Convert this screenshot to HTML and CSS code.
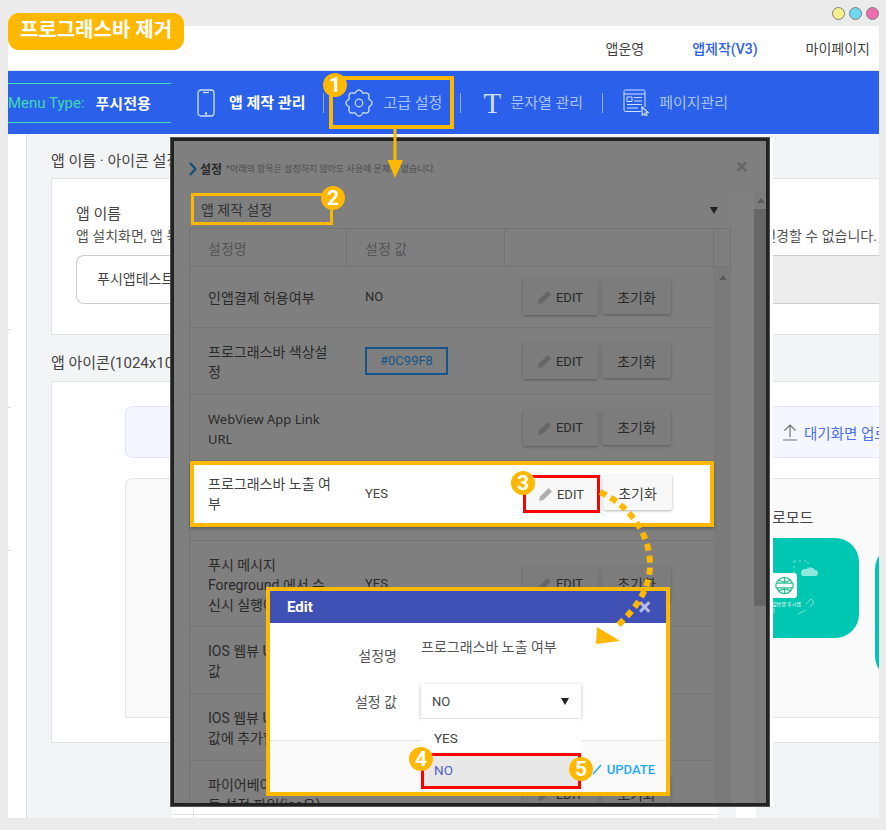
FILE: index.html
```html
<!DOCTYPE html>
<html lang="ko">
<head>
    <meta charset="UTF-8">
    <title>프로그래스바 제거</title>
    <link rel="stylesheet" href="styles.css">
</head>
<body>

    <div class="window">

        <header class="top">
            <a class="top-link">앱운영</a>
            <a class="top-link top-on">앱제작(V3)</a>
            <a class="top-link">마이페이지</a>
        </header>

        <nav class="nav">
            <div class="menu-type"><span class="menu-label">Menu Type:</span><b>푸시전용</b></div>
            <div class="nav-item nav-on">
                <svg class="ico-phone" viewBox="0 0 18 28" fill="none" stroke="#cfe0ff" stroke-width="1.3"><rect x="1" y="1" width="16" height="26" rx="3"/><path d="M6 3.5h6"/><circle cx="9" cy="24.5" r=".6"/></svg>
                <span>앱 제작 관리</span>
            </div>
            <i class="nav-sep"></i>
            <div class="nav-item">
                <svg class="ico-gear" viewBox="0 0 28 28" fill="none" stroke="#cfe0ff" stroke-width="1.2"><path d="M23.7 9.98Q30.5 14 23.7 18.02Q25.67 25.67 18.02 23.7Q14 30.5 9.98 23.7Q2.33 25.67 4.3 18.02Q-2.5 14 4.3 9.98Q2.33 2.33 9.98 4.3Q14 -2.5 18.02 4.3Q25.67 2.33 23.7 9.98z"/><circle cx="14" cy="14" r="3.8"/></svg>
                <span>고급 설정</span>
            </div>
            <i class="nav-sep sep-b"></i>
            <div class="nav-item nav-text">
                <span class="ico-t">T</span>
                <span>문자열 관리</span>
            </div>
            <i class="nav-sep sep-c"></i>
            <div class="nav-item">
                <svg class="ico-page" viewBox="0 0 26 27" fill="none" stroke="#cfe0ff" stroke-width="1"><path d="M18 22.500H2.500A1.500 1.500 0 0 1 1 21V2.500A1.500 1.500 0 0 1 2.500 1h18A1.500 1.500 0 0 1 22 2.500V18M1 5h21M4 8h5v4.500H4zM11 8.500h8M11 12h8M4 15.500h15M4 19h11"/><path d="M19 18l6 5.500-2.500.5 1.500 2-1.500 1-1.500-2.200-1.800 1.400z" stroke-width="1.2"/></svg>
                <span>페이지관리</span>
            </div>
        </nav>

        <div class="main">
            <aside class="side"><i></i><i></i><i></i></aside>
            <div class="content">
                <h3 class="sec-title first">앱 이름 · 아이콘 설정</h3>
                <section class="card card-name">
                    <p class="field-name">앱 이름</p>
                    <p class="field-help">앱 설치화면, 앱 목록에 노출되는 이름입니다. 앱의 이름은 앱 제작을 완료하여 앱 스토어 마켓에 등록한 이후에는 더 이상 변경할 수 없습니다.</p>
                    <div class="name-input">
                        <span class="name-value">푸시앱테스트</span>
                        <span class="name-rest"></span>
                    </div>
                </section>

                <h3 class="sec-title">앱 아이콘(1024x1024)</h3>
                <section class="card card-icon">
                    <div class="upload">
                        <svg class="ico-up" viewBox="0 0 16 18" fill="none" stroke="#6b7280" stroke-width="1.2"><path d="M8 14V2M2.500 7.500L8 2l5.500 5.500M1 17h14"/></svg>
                        <span>대기화면 업로드</span>
                    </div>
                    <div class="preview">
                        <p class="preview-title">로모드</p>
                        <div class="shots">
                            <div class="shot">
                                <svg class="shot-deco" viewBox="0 0 87 100" fill="none" stroke="#7fe3d6" stroke-width="1"><path d="M22 23h14v10M22 23v12" stroke-dasharray="2 3"/><path d="M29 35a4 4 0 0 1 4-4h2a5 5 0 0 1 8 1 3 3 0 0 1 0 6H31a3 3 0 0 1-2-3z" fill="#8ee8dc" stroke="none"/><path d="M34 66l5-5 3 3-4 5M26 76l8-4M2 70v6"/></svg>
                                <div class="shot-tile">
                                    <svg viewBox="0 0 20 20" fill="none" stroke="#2fbf8f" stroke-width="1.3"><circle cx="10" cy="10" r="8.500" fill="#e8fbf4"/><path d="M10 1.500v17M4 4.500c3.500 2 8.500 2 12 0M4 15.500c3.500-2 8.500-2 12 0"/><rect x="1" y="7.500" width="18" height="5" rx="1" fill="#fff"/></svg>
                                </div>
                                <span class="shot-text">일반앱 푸시앱</span>
                            </div>
                            <div class="shot shot-next"></div>
                        </div>
                    </div>
                </section>
                <div class="foot">
                    <i class="foot-a"></i>
                    <i class="foot-b"></i>
                </div>
            </div>
        </div>
    </div>

    <div class="dots"><i class="dot-y"></i><i class="dot-c"></i><i class="dot-p"></i></div>
    <div class="tag">프로그래스바 제거</div>

    <!-- dimmed settings dialog -->
    <div class="dialog">
        <div class="dlg-head">
            <svg class="chev" viewBox="0 0 8 14" fill="none" stroke="#0f4f80" stroke-width="2.2"><path d="M1 1l5.500 6L1 13"/></svg>
            <b>설정</b>
            <small>*아래의 항목은 설정하지 않아도 사용에 문제가 없습니다.</small>
            <span class="dlg-x">×</span>
        </div>
        <div class="dlg-body">
            <div class="dlg-left">
                <div class="group">앱 제작 설정<i class="caret"></i></div>
                <div class="thead">
                    <span class="c1">설정명</span><span class="c2">설정 값</span><span class="c3"></span><span class="c4"></span>
                </div>
                <div class="tbody">
                    <div class="rows">
                        <div class="row h61">
                            <span class="c1">인앱결제 허용여부</span><span class="c2">NO</span>
                            <span class="c3"><button class="btn btn-edit"><svg class="pencil" viewBox="0 0 14 14"><path d="M0 14l1-4.500L9.500 1l3.500 3.500L4.500 13z" fill="#666"/></svg>EDIT</button><button class="btn btn-reset">초기화</button></span>
                        </div>
                        <div class="row h67">
                            <span class="c1">프로그래스바 색상설정</span><span class="c2"><span class="color-box">#0C99F8</span></span>
                            <span class="c3"><button class="btn btn-edit"><svg class="pencil" viewBox="0 0 14 14"><path d="M0 14l1-4.500L9.500 1l3.500 3.500L4.500 13z" fill="#666"/></svg>EDIT</button><button class="btn btn-reset">초기화</button></span>
                        </div>
                        <div class="row h66">
                            <span class="c1 lat">WebView App Link URL</span><span class="c2"></span>
                            <span class="c3"><button class="btn btn-edit"><svg class="pencil" viewBox="0 0 14 14"><path d="M0 14l1-4.500L9.500 1l3.500 3.500L4.500 13z" fill="#666"/></svg>EDIT</button><button class="btn btn-reset">초기화</button></span>
                        </div>
                        <div class="row h80"></div>
                        <div class="row h86">
                            <span class="c1">푸시 메시지 Foreground 에서 수신시 실행여부</span><span class="c2">YES</span>
                            <span class="c3"><button class="btn btn-edit"><svg class="pencil" viewBox="0 0 14 14"><path d="M0 14l1-4.500L9.500 1l3.500 3.500L4.500 13z" fill="#666"/></svg>EDIT</button><button class="btn btn-reset">초기화</button></span>
                        </div>
                        <div class="row h67">
                            <span class="c1">IOS 웹뷰 UserAgent 값</span><span class="c2"></span><span class="c3"></span>
                        </div>
                        <div class="row h67">
                            <span class="c1">IOS 웹뷰 UserAgent 값에 추가할 값</span><span class="c2"></span><span class="c3"></span>
                        </div>
                        <div class="row h67">
                            <span class="c1">파이어베이스 구글 모듈 설정 파일(ios용)</span><span class="c2"></span>
                            <span class="c3"><button class="btn btn-edit"><svg class="pencil" viewBox="0 0 14 14"><path d="M0 14l1-4.500L9.500 1l3.500 3.500L4.500 13z" fill="#666"/></svg>EDIT</button><button class="btn btn-reset">초기화</button></span>
                        </div>
                    </div>
                    <div class="tbar"><i></i></div>
                </div>
            </div>
            <div class="dlg-bar"><i class="bar-up"></i><i class="bar-thumb"></i></div>
        </div>
    </div>

    <!-- callouts on top of the screenshot -->
    <div class="mark mark-gear"></div>
    <div class="mark mark-group"></div>

    <div class="hl-row">
        <span class="c1">프로그래스바 노출 여부</span><span class="c2">YES</span>
        <span class="c3"><button class="btn btn-edit red-box"><svg class="pencil" viewBox="0 0 14 14"><path d="M0 14l1-4.500L9.500 1l3.500 3.500L4.500 13z" fill="#b0b0b0"/></svg>EDIT</button><button class="btn btn-reset">초기화</button></span>
    </div>

    <div class="edit-pop">
        <div class="pop-head"><b>Edit</b><span class="pop-x">×</span></div>
        <div class="pop-body">
            <div class="pop-line line-name"><label>설정명</label><span>프로그래스바 노출 여부</span></div>
            <div class="pop-line line-value"><label>설정 값</label>
                <div class="select">NO<i class="caret"></i></div>
            </div>
        </div>
        <div class="pop-foot">
            <span class="update"><svg viewBox="0 0 10 12" fill="none" stroke="#1fa8ff" stroke-width="1.5"><path d="M1 11L9 2"/></svg>UPDATE</span>
        </div>
        <div class="menu">
            <div class="menu-item">YES</div>
            <div class="menu-item menu-on">NO</div>
        </div>
    </div>

    <svg class="arrows" viewBox="0 0 886 830" fill="none">
        <path d="M395 129V164" stroke="#ffb800" stroke-width="3"/>
        <path d="M387.500 160H403L395 178z" fill="#ffb800"/>
        <path d="M600 492C625 503 650 530 650 565C650 590 635 610 615 628" stroke="#ffb800" stroke-width="6" stroke-dasharray="7 5"/>
        <path d="M596 644L620 641L597 627z" fill="#ffb800"/>
    </svg>

    <span class="num n1">1</span>
    <span class="num n2">2</span>
    <span class="num n3">3</span>
    <span class="num n4">4</span>
    <span class="num n5">5</span>

</body>
</html>
```

FILE: styles.css
```css
* {
    box-sizing: border-box;
}

html, body {
    margin: 0;
    height: 830px;
    overflow: hidden;
}

body {
    position: relative;
    background-color: #ebebeb;
    font-family: Roboto, "Noto Sans CJK KR", sans-serif;
    font-size: 14px;
    color: #333;
    padding: 26px 7px 12px 8px;
}

i {
    display: block;
}

/* page behind the dialog */

.window {
    height: 792px;
    background-color: #fff;
    display: flex;
    flex-direction: column;
    overflow: hidden;
}

.top {
    height: 45px;
    flex: none;
    display: flex;
    justify-content: flex-end;
    align-items: center;
    gap: 48px;
    padding: 0 9px 1px 0;
    border-bottom: 1px solid #e4e6ee;
}

.top-link {
    color: #444;
}

.top-on {
    color: #2b60ea;
    font-weight: 500;
}

.nav {
    height: 63px;
    flex: none;
    display: flex;
    align-items: center;
    background-color: #2b60ea;
    color: #a9c2f7;
    font-size: 15px;
}

.menu-type {
    width: 163px;
    height: 40px;
    flex: none;
    display: flex;
    align-items: center;
    gap: 11px;
    border-top: 1px solid #3ddbb5;
    border-bottom: 1px solid #3ddbb5;
    color: #fff;
    white-space: nowrap;
}

.menu-label {
    color: #3ddbb5;
}

.nav-item {
    display: flex;
    align-items: center;
    gap: 10px;
    white-space: nowrap;
}

.nav-item span:last-child {
    margin-bottom: 2px;
}

.nav-on {
    margin-left: 26px;
    gap: 14px;
    color: #fff;
    font-weight: 700;
}

.nav-text {
    gap: 9px;
}

.nav-sep {
    width: 1px;
    height: 20px;
    background-color: #8fadf0;
    margin: 0 21px 0 18px;
}

.sep-b {
    margin: 0 22px 0 18px;
}

.sep-c {
    margin: 0 20px 0 19px;
}

.ico-phone {
    width: 18px;
    height: 28px;
}

.ico-gear {
    width: 28px;
    height: 28px;
}

.ico-t {
    width: 18px;
    font-family: "Liberation Serif", serif;
    font-size: 29px;
    line-height: 28px;
    text-align: center;
    color: #cfe0ff;
}

.ico-page {
    width: 26px;
    height: 27px;
}

.main {
    flex: 1;
    display: flex;
    min-height: 0;
}

.side {
    width: 19px;
    flex: none;
    border-right: 1px solid #dcdee3;
    padding-top: 195px;
    display: flex;
    flex-direction: column;
    gap: 77px;
}

.side i {
    width: 3px;
    height: 1px;
    background-color: #d8dae6;
}

.side i:last-child {
    margin-top: 65px;
}

.content {
    flex: 1;
    min-width: 0;
    background-color: #f3f4f6;
    padding-left: 24px;
}

.sec-title {
    margin: 0;
    height: 46px;
    padding-top: 18px;
    font-size: 15px;
    font-weight: 400;
    color: #444;
    white-space: nowrap;
    line-height: 20px;
}

.first {
    height: 44px;
    padding-top: 17px;
}

.card {
    background-color: #fff;
    border: 1px solid #e3e4e8;
    border-right: none;
}

.card-name {
    height: 157px;
    padding: 25px 0 0 24px;
}

.field-name {
    margin: 0;
    font-size: 15px;
    line-height: 20px;
    color: #444;
}

.field-help {
    margin: 2px 0 0;
    height: 20px;
    line-height: 20px;
    color: #555;
    white-space: nowrap;
}

.name-input {
    margin-top: 9px;
    height: 49px;
    display: flex;
}

.name-value {
    width: 160px;
    flex: none;
    border: 1px solid #ccc;
    border-right: none;
    border-radius: 8px 0 0 8px;
    padding-left: 20px;
    line-height: 47px;
    color: #444;
    white-space: nowrap;
}

.name-rest {
    flex: 1;
    background-color: #ececec;
    border-top: 1px solid #ccc;
    border-bottom: 1px solid #ccc;
}

.card-icon {
    height: 362px;
    padding: 24px 0 0 73px;
}

.upload {
    height: 52px;
    background-color: #f4f7ff;
    border: 1px solid #e4e7f0;
    border-right: none;
    border-radius: 8px 0 0 8px;
    display: flex;
    align-items: center;
    justify-content: flex-end;
    gap: 6px;
    margin-bottom: 20px;
    color: #4a6ff0;
    font-size: 14.5px;
    white-space: nowrap;
    overflow: hidden;
}

.upload span {
    width: 75px;
    overflow: hidden;
}

.ico-up {
    width: 16px;
    height: 18px;
}

.preview {
    height: 240px;
    background-color: #fafafa;
    border: 1px solid #e4e5e8;
    border-right: none;
    border-radius: 8px 0 0 0;
    padding: 29px 0 0 646px;
    overflow: hidden;
}

.preview-title {
    margin: 0 0 10px;
    height: 20px;
    line-height: 20px;
    font-size: 15px;
    color: #444;
    white-space: nowrap;
}

.shots {
    display: flex;
    gap: 16px;
}

.shot {
    width: 87px;
    height: 100px;
    flex: none;
    background-color: #00c7b1;
    border-radius: 0 24px 24px 0;
    padding-top: 35px;
    position: relative;
    color: #fff;
}

.shot-deco {
    position: absolute;
    left: 0;
    top: 0;
    width: 87px;
    height: 100px;
}

.shot-tile {
    position: relative;
    width: 25px;
    height: 25px;
    background-color: #fff;
    border-radius: 0 3px 3px 0;
    padding: 3px;
}

.shot-tile svg {
    display: block;
    width: 19px;
    height: 19px;
}

.shot-text {
    position: relative;
    display: block;
    margin-top: 2px;
    font-size: 5px;
    line-height: 8px;
    white-space: nowrap;
}

.shot-next {
    width: 87px;
    height: 135px;
    border-radius: 24px;
    margin-top: 7px;
}

.foot {
    height: 75px;
    display: flex;
    padding-top: 40px;
}

.foot-a {
    width: 546px;
    margin-left: 121px;
    background-color: #fff;
    background-image: linear-gradient(#e4e5e8, #e4e5e8), linear-gradient(#e4e5e8, #e4e5e8);
    background-size: 1px 100%, 100% 1px;
    background-position: 21px 0, 0 31px;
    background-repeat: no-repeat;
}

.foot-b {
    width: 20px;
    margin-left: 18px;
    background-color: #fff;
}

/* top corner pieces */

.tag {
    position: absolute;
    left: 8px;
    top: 13px;
    width: 176px;
    height: 37px;
    background-color: #ffb800;
    border-radius: 11px;
    color: #fff;
    font-size: 20px;
    font-weight: 700;
    line-height: 35px;
    text-align: center;
    white-space: nowrap;
}

.dots {
    position: absolute;
    top: 7px;
    left: 832px;
    display: flex;
    gap: 4px;
}

.dots i {
    width: 13px;
    height: 13px;
    border-radius: 50%;
    border: 1.5px solid #808080;
}

.dot-y {
    background-color: #f5f08c;
}

.dot-c {
    background-color: #6fd8ef;
}

.dot-p {
    background-color: #f06cb0;
}

/* dimmed dialog */

.dialog {
    position: absolute;
    left: 171px;
    top: 138px;
    width: 598px;
    height: 668px;
    background-color: #7f7f7f;
    border: 3px solid #222;
    outline: 1px solid #555;
    box-shadow: 4px 0 0 #fff;
    overflow: hidden;
    color: #2a2a2a;
}

.dlg-head {
    height: 51px;
    display: flex;
    align-items: center;
    padding: 3px 0 0 15px;
    position: relative;
}

.chev {
    width: 8px;
    height: 14px;
    margin-right: 3px;
    margin-top: 2px;
}

.dlg-head b {
    font-size: 12px;
    font-weight: 700;
    margin-right: 4px;
}

.dlg-head small {
    font-size: 9px;
    color: #4c4c4c;
    white-space: nowrap;
}

.dlg-x {
    position: absolute;
    left: 562px;
    top: 12px;
    font-size: 22px;
    line-height: 28px;
    font-weight: 700;
    color: #666;
}

.dlg-body {
    display: flex;
    height: 614px;
}

.dlg-left {
    width: 557px;
    flex: none;
    padding-left: 15px;
}

.group {
    height: 36px;
    display: flex;
    align-items: center;
    padding: 0 10px 2px 12px;
    justify-content: space-between;
    white-space: nowrap;
    color: #333;
}

.caret {
    width: 0;
    height: 0;
    border-left: 4.5px solid transparent;
    border-right: 4.5px solid transparent;
    border-top: 7px solid #222;
}

.group .caret {
    margin: 3px 3px 0 0;
}

.thead {
    height: 39px;
    display: flex;
    align-items: center;
    border: 1px solid #737373;
    color: #555;
}

.thead span {
    height: 100%;
    display: flex;
    align-items: center;
    border-right: 1px solid #737373;
}

.c1 {
    width: 157px;
    flex: none;
    padding-left: 18px;
}

.c2 {
    width: 158px;
    flex: none;
    padding-left: 18px;
    font-size: 13px;
}

.thead .c2 {
    font-size: 14px;
}

.c3 {
    width: 209px;
    flex: none;
    display: flex;
    gap: 4px;
    padding-left: 18px;
}

.c4 {
    flex: 1;
}

.thead .c4 {
    border-right: none;
}

.tbody {
    display: flex;
    border-left: 1px solid #737373;
}

.rows {
    width: 524px;
    flex: none;
}

.row {
    display: flex;
    align-items: center;
    border-bottom: 1px solid #737373;
    line-height: 20px;
}

.row .c1 {
    padding-right: 14px;
    padding-top: 2px;
}

.row .lat {
    font-family: "Noto Sans", sans-serif;
    font-size: 13px;
}

.h61 { height: 61px; }
.h66 { height: 66px; }
.h67 { height: 67px; }
.h80 { height: 80px; }
.h86 { height: 86px; }

.tbar {
    width: 18px;
    height: 560px;
    background-color: #7a7a7a;
}

.tbar i {
    width: 0;
    height: 0;
    margin: 8px auto 0;
    border-left: 4px solid transparent;
    border-right: 4px solid transparent;
    border-bottom: 5px solid #5a5a5a;
}

.dlg-bar {
    flex: 1;
    background-color: #7c7c7c;
    margin-left: 1px;
    border-left: 22px solid #808080;
}

.bar-up {
    height: 17px;
    position: relative;
}

.bar-up::after {
    content: "";
    position: absolute;
    left: 3px;
    top: 6px;
    border-left: 4px solid transparent;
    border-right: 4px solid transparent;
    border-bottom: 5px solid #5a5a5a;
}

.bar-thumb {
    height: 397px;
    background-color: #666;
}

.btn {
    height: 36px;
    border: none;
    border-radius: 2px;
    background-color: #7c7c7c;
    font-family: inherit;
    font-size: 14px;
    color: #2a2a2a;
    box-shadow: 0 1px 3px rgba(0, 0, 0, 0.3);
    display: flex;
    align-items: center;
    justify-content: center;
    padding: 0;
}

.btn-edit {
    width: 75px;
    gap: 4px;
    font-size: 13px;
}

.btn-reset {
    width: 69px;
    height: 35px;
}

.pencil {
    width: 14px;
    height: 14px;
}

.color-box {
    display: block;
    width: 83px;
    height: 28px;
    border: 2px solid #15558c;
    color: #15558c;
    text-align: center;
    line-height: 23px;
}

/* callouts */

.mark {
    position: absolute;
    border: 4px solid #ffb800;
}

.mark-gear {
    left: 329px;
    top: 76px;
    width: 125px;
    height: 53px;
}

.mark-group {
    left: 191px;
    top: 193px;
    width: 142px;
    height: 32px;
    border-width: 3px;
}

.hl-row {
    position: absolute;
    left: 190px;
    top: 461px;
    width: 524px;
    height: 66px;
    background-color: #fff;
    border: 4px solid #ffb800;
    box-shadow: 0 2px 3px rgba(0, 0, 0, 0.25);
    display: flex;
    align-items: center;
    line-height: 20px;
    color: #444;
}

.hl-row .c1 {
    width: 157px;
    padding: 0 18px 0 14px;
}

.hl-row .c2 {
    width: 158px;
    padding-left: 14px;
}

.hl-row .c3 {
    padding-left: 14px;
    gap: 3px;
}

.hl-row .btn {
    background-color: #f8f8f8;
    color: #444;
}

.hl-row .red-box {
    border: 3px solid #f00;
    width: 77px;
    height: 38px;
    box-shadow: none;
    border-radius: 0;
}

.edit-pop {
    position: absolute;
    left: 266px;
    top: 587px;
    width: 404px;
    height: 209px;
    background-color: #fff;
    border: 4px solid #ffb800;
    color: #555;
}

.pop-head {
    height: 32px;
    background-color: #3f51b5;
    color: #fff;
    display: flex;
    align-items: center;
    justify-content: space-between;
    padding: 0 15px 0 17px;
    font-size: 15px;
}

.pop-x {
    font-size: 24px;
    font-weight: 700;
    line-height: 28px;
    color: #b9bde6;
}

.pop-body {
    height: 118px;
    padding-top: 13px;
    border-bottom: 1px solid #e4e4e4;
}

.pop-line {
    display: flex;
    gap: 24px;
}

.pop-line label {
    width: 127px;
    flex: none;
    text-align: right;
    line-height: 20px;
}

.line-name {
    height: 48px;
}

.line-name label {
    padding-top: 10px;
}

.line-value label {
    padding-top: 8px;
}

.select {
    width: 160px;
    height: 34px;
    display: flex;
    align-items: center;
    justify-content: space-between;
    padding: 0 12px 0 11px;
    box-shadow: 0 1px 4px rgba(0, 0, 0, 0.25);
    color: #444;
    font-size: 13px;
}

.pop-foot {
    height: 51px;
    background-color: #fafafa;
    display: flex;
    align-items: center;
    justify-content: flex-end;
    padding: 5px 11px 0 0;
}

.update {
    display: flex;
    align-items: center;
    gap: 5px;
    color: #1fa8ff;
    font-weight: 500;
    font-size: 13px;
}

.update svg {
    width: 10px;
    height: 12px;
}

.menu {
    position: absolute;
    left: 151px;
    top: 128px;
    width: 160px;
    height: 70px;
    background-color: #fff;
    box-shadow: 0 -1px 0 #e4e4e4;
    font-size: 13.5px;
}

.menu-item {
    height: 34px;
    line-height: 38px;
    padding-left: 13px;
    color: #444;
}

.menu-on {
    height: 36px;
    background-color: #e8e8e8;
    border: 3px solid #f00;
    line-height: 28px;
    padding-left: 10px;
    color: #4f63c4;
}

.arrows {
    position: absolute;
    left: 0;
    top: 0;
    width: 886px;
    height: 830px;
    pointer-events: none;
}

.num {
    position: absolute;
    width: 24px;
    height: 24px;
    border-radius: 50%;
    background-color: #ffb800;
    color: #fff;
    font-size: 21px;
    font-weight: 700;
    line-height: 24px;
    text-align: center;
}

.n1 { left: 323px; top: 73px; }
.n2 { left: 321px; top: 186px; }
.n3 { left: 511px; top: 471px; }
.n4 { left: 409px; top: 747px; }
.n5 { left: 569px; top: 757px; }
```
